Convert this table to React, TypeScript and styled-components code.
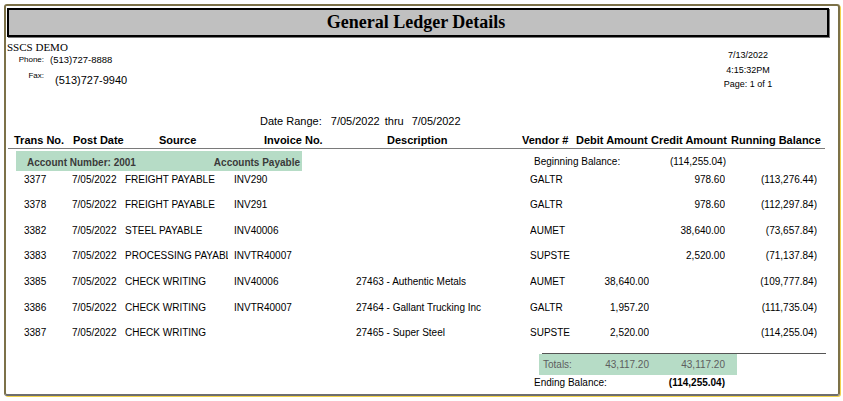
import React from 'react';
import styled, { createGlobalStyle } from 'styled-components';

const GlobalStyle = createGlobalStyle`
  html, body { margin: 0; padding: 0; background: #fff; }
  body { font-family: "Liberation Sans", Arial, sans-serif; color: #000; }
  * { box-sizing: border-box; }
`;

const GREEN = '#b6dcc6';

const Frame = styled.div`
  margin: 4px;
  width: 836px;
  height: 392px;
  border: 2px solid #7c7148;
  border-bottom-color: #6e6e6e;
  border-radius: 3px;
  box-shadow: 1px 1px 0 #f2d34c;
  display: flex;
  flex-direction: column;
  overflow: hidden;
`;

const TitleBar = styled.div`
  margin: 2px 0 0 1px;
  width: 822px;
  height: 29px;
  flex: none;
  background: #c0c0c0;
  border: 2px solid #000;
  box-shadow: 1px 1px 0 #7a7a7a;
  display: flex;
  align-items: center;
  justify-content: center;
  padding-right: 4px;
  font-family: "Liberation Serif", "Times New Roman", serif;
  font-weight: bold;
  font-size: 18px;
`;

const InfoSection = styled.div`
  display: flex;
  justify-content: space-between;
  height: 77px;
  flex: none;
`;

const Company = styled.div`
  padding: 4px 0 0 1px;
  display: flex;
  flex-direction: column;
`;

const CompanyName = styled.div`
  font-family: "Liberation Serif", "Times New Roman", serif;
  font-size: 11px;
  line-height: 12px;
`;

const ContactRow = styled.div<{ $top: number }>`
  display: flex;
  align-items: flex-start;
  margin-top: ${p => p.$top}px;
`;

const ContactLabel = styled.div<{ $offset: number }>`
  width: 37px;
  text-align: right;
  font-size: 8px;
  line-height: 10px;
  margin-top: ${p => p.$offset}px;
`;

const ContactValue = styled.div<{ $size: number; $gap: number; $offset: number }>`
  font-size: ${p => p.$size}px;
  line-height: 14px;
  margin-left: ${p => p.$gap}px;
  margin-top: ${p => p.$offset}px;
`;

const DateInfo = styled.div`
  width: 80px;
  margin-right: 50px;
  padding-top: 10px;
  text-align: center;
  font-size: 9px;
`;

const DateLine = styled.div<{ $h: number }>`
  line-height: ${p => p.$h}px;
`;

const DateRange = styled.div`
  display: flex;
  height: 14px;
  line-height: 14px;
  padding-left: 254px;
  font-size: 11px;
  flex: none;
`;

const RangePart = styled.span<{ $gap: number }>`
  margin-left: ${p => p.$gap}px;
`;

const HeaderRow = styled.div`
  display: grid;
  grid-template-columns: 59px 86px 105px 123px 135px 54px 75px 80px 1fr;
  padding-left: 8px;
  margin-top: 5px;
  font-size: 11px;
  font-weight: bold;
  line-height: 14px;
  white-space: nowrap;
  flex: none;
`;

const Rule = styled.div<{ $left: number; $width: number; $top: number; $color: string }>`
  margin-left: ${p => p.$left}px;
  margin-top: ${p => p.$top}px;
  width: ${p => p.$width}px;
  height: 1px;
  background: ${p => p.$color};
  flex: none;
`;

const AccountRow = styled.div`
  display: flex;
  align-items: center;
  height: 20px;
  margin-top: 2px;
  padding-top: 1px;
  flex: none;
`;

const AccountBar = styled.div`
  margin-left: 10px;
  width: 286px;
  height: 20px;
  margin-top: -1px;
  background: ${GREEN};
  display: flex;
  align-items: center;
  justify-content: space-between;
  padding: 2px 2px 0 11px;
  font-size: 10px;
  font-weight: bold;
  color: #3a3a3a;
`;

const BeginLabel = styled.div`
  margin-left: 232px;
  width: 100px;
  font-size: 10px;
`;

const BeginValue = styled.div`
  width: 92px;
  text-align: right;
  font-size: 10px;
`;

const Rows = styled.div`
  margin-top: 2.5px;
  flex: none;
`;

const DataRow = styled.div`
  display: grid;
  grid-template-columns: 48px 53px 109px 122px 174px 60px 59px 76px 92px;
  padding-left: 18px;
  height: 25.67px;
  font-size: 10px;
  line-height: 12px;
`;

const Cell = styled.div<{ $right?: boolean; $clip?: number }>`
  white-space: nowrap;
  overflow: hidden;
  text-align: ${p => (p.$right ? 'right' : 'left')};
  ${p => (p.$clip ? `width: ${p.$clip}px;` : '')}
`;

const TotalsBox = styled.div`
  margin-left: 533px;
  width: 198px;
  height: 21px;
  background: ${GREEN};
  display: grid;
  grid-template-columns: 47px 59px 76px;
  align-items: center;
  padding-left: 4px;
  font-size: 10px;
  color: #5e5e5e;
  flex: none;
`;

const TotalsCell = styled.div<{ $right?: boolean }>`
  text-align: ${p => (p.$right ? 'right' : 'left')};
`;

const EndingRow = styled.div`
  display: grid;
  grid-template-columns: 100px 91px;
  margin: 2px 0 0 528px;
  font-size: 10px;
  line-height: 12px;
  flex: none;
`;

const EndingValue = styled.div`
  text-align: right;
  font-weight: bold;
`;

type Row = {
  no: string;
  source: string;
  inv: string;
  desc: string;
  vendor: string;
  debit: string;
  credit: string;
  bal: string;
};

const rows: Row[] = [
  { no: '3377', source: 'FREIGHT PAYABLE', inv: 'INV290', desc: '', vendor: 'GALTR', debit: '', credit: '978.60', bal: '(113,276.44)' },
  { no: '3378', source: 'FREIGHT PAYABLE', inv: 'INV291', desc: '', vendor: 'GALTR', debit: '', credit: '978.60', bal: '(112,297.84)' },
  { no: '3382', source: 'STEEL PAYABLE', inv: 'INV40006', desc: '', vendor: 'AUMET', debit: '', credit: '38,640.00', bal: '(73,657.84)' },
  { no: '3383', source: 'PROCESSING PAYABLE', inv: 'INVTR40007', desc: '', vendor: 'SUPSTE', debit: '', credit: '2,520.00', bal: '(71,137.84)' },
  { no: '3385', source: 'CHECK WRITING', inv: 'INV40006', desc: '27463 - Authentic Metals', vendor: 'AUMET', debit: '38,640.00', credit: '', bal: '(109,777.84)' },
  { no: '3386', source: 'CHECK WRITING', inv: 'INVTR40007', desc: '27464 - Gallant Trucking Inc', vendor: 'GALTR', debit: '1,957.20', credit: '', bal: '(111,735.04)' },
  { no: '3387', source: 'CHECK WRITING', inv: '', desc: '27465 - Super Steel', vendor: 'SUPSTE', debit: '2,520.00', credit: '', bal: '(114,255.04)' },
];

export default function App() {
  return (
    <>
      <GlobalStyle />
      <Frame>
        <TitleBar>General Ledger Details</TitleBar>
        <InfoSection>
          <Company>
            <CompanyName>SSCS DEMO</CompanyName>
            <ContactRow $top={1}>
              <ContactLabel $offset={1}>Phone:</ContactLabel>
              <ContactValue $size={9.5} $gap={6} $offset={-1}>(513)727-8888</ContactValue>
            </ContactRow>
            <ContactRow $top={1}>
              <ContactLabel $offset={3}>Fax:</ContactLabel>
              <ContactValue $size={11} $gap={11} $offset={5}>(513)727-9940</ContactValue>
            </ContactRow>
          </Company>
          <DateInfo>
            <DateLine $h={16}>7/13/2022</DateLine>
            <DateLine $h={14}>4:15:32PM</DateLine>
            <DateLine $h={14}>Page: 1 of 1</DateLine>
          </DateInfo>
        </InfoSection>
        <DateRange>
          <span>Date Range:</span>
          <RangePart $gap={9}>7/05/2022</RangePart>
          <RangePart $gap={5}>thru</RangePart>
          <RangePart $gap={8}>7/05/2022</RangePart>
        </DateRange>
        <HeaderRow>
          <span>Trans No.</span>
          <span>Post Date</span>
          <span>Source</span>
          <span>Invoice No.</span>
          <span>Description</span>
          <span>Vendor #</span>
          <span>Debit Amount</span>
          <span>Credit Amount</span>
          <span>Running Balance</span>
        </HeaderRow>
        <Rule $left={2} $width={817} $top={1} $color="#7a7a7a" />
        <AccountRow>
          <AccountBar>
            <span>Account Number: 2001</span>
            <span>Accounts Payable</span>
          </AccountBar>
          <BeginLabel>Beginning Balance:</BeginLabel>
          <BeginValue>(114,255.04)</BeginValue>
        </AccountRow>
        <Rows>
          {rows.map(r => (
            <DataRow key={r.no}>
              <Cell>{r.no}</Cell>
              <Cell>7/05/2022</Cell>
              <Cell $clip={103}>{r.source}</Cell>
              <Cell>{r.inv}</Cell>
              <Cell>{r.desc}</Cell>
              <Cell>{r.vendor}</Cell>
              <Cell $right>{r.debit}</Cell>
              <Cell $right>{r.credit}</Cell>
              <Cell $right>{r.bal}</Cell>
            </DataRow>
          ))}
        </Rows>
        <Rule $left={536} $width={284} $top={0} $color="#555" />
        <TotalsBox>
          <TotalsCell>Totals:</TotalsCell>
          <TotalsCell $right>43,117.20</TotalsCell>
          <TotalsCell $right>43,117.20</TotalsCell>
        </TotalsBox>
        <EndingRow>
          <span>Ending Balance:</span>
          <EndingValue>(114,255.04)</EndingValue>
        </EndingRow>
      </Frame>
    </>
  );
}
